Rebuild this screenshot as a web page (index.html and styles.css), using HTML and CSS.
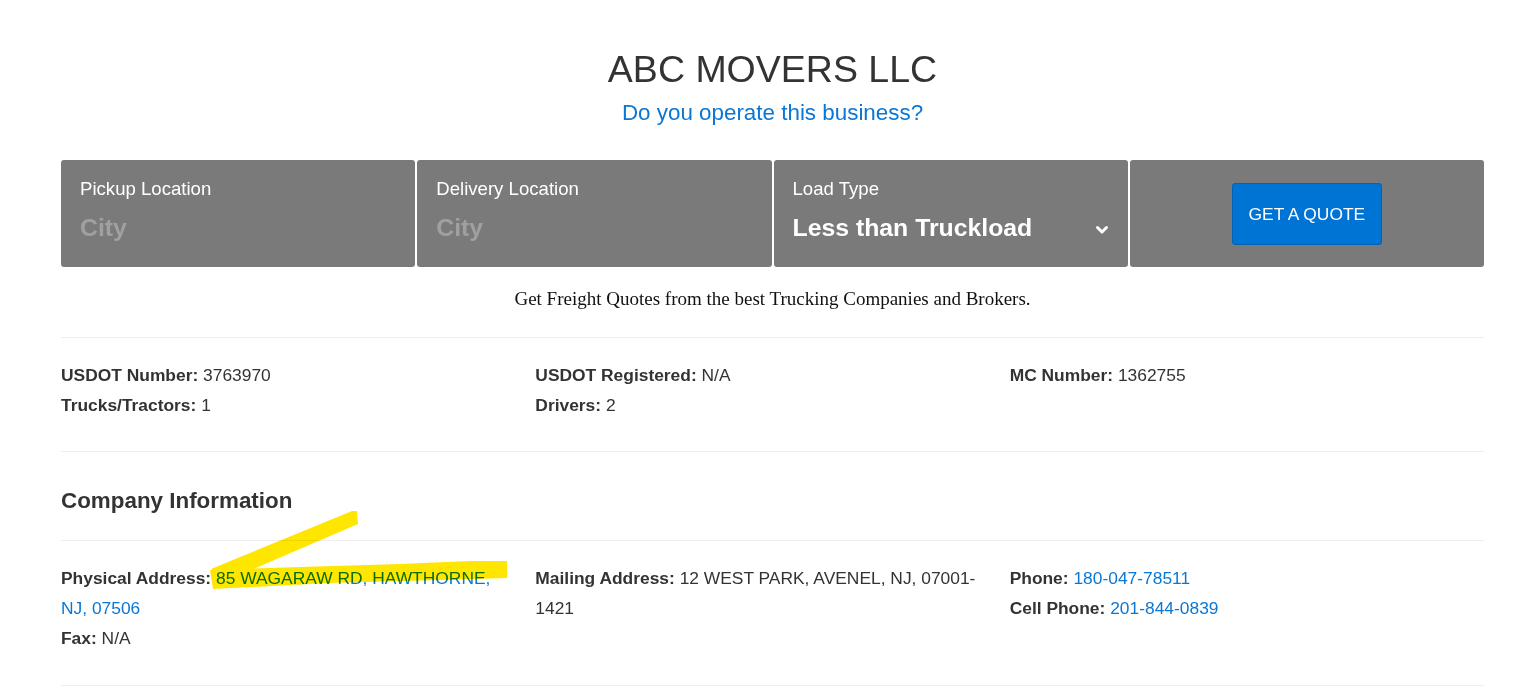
FILE: index.html
```html
<!DOCTYPE html>
<html lang="en">
<head>
<meta charset="utf-8">
<title>ABC MOVERS LLC</title>
<link rel="stylesheet" href="styles.css">
</head>
<body>
<div class="page">
  <header class="hero">
    <h1 class="hero-title">ABC MOVERS LLC</h1>
    <a class="hero-claim" href="#">Do you operate this business?</a>
  </header>

  <form class="quote">
    <div class="quote-field">
      <span class="quote-label">Pickup Location</span>
      <span class="quote-input placeholder">City</span>
    </div>
    <div class="quote-field">
      <span class="quote-label">Delivery Location</span>
      <span class="quote-input placeholder">City</span>
    </div>
    <div class="quote-field">
      <span class="quote-label">Load Type</span>
      <span class="quote-input quote-select">
        <span>Less than Truckload</span>
        <svg class="chevron" width="14" height="10" viewBox="0 0 14 10"><polyline points="2.5,2.5 7,7 11.5,2.5" fill="none" stroke="#fff" stroke-width="3" stroke-linecap="round" stroke-linejoin="round"/></svg>
      </span>
    </div>
    <div class="quote-field quote-action">
      <button type="button" class="quote-btn">GET A QUOTE</button>
    </div>
  </form>

  <p class="tagline">Get Freight Quotes from the best Trucking Companies and Brokers.</p>

  <hr class="rule">

  <section class="facts facts-top">
    <div class="fact-col">
      <div class="fact"><b>USDOT Number:</b> 3763970</div>
      <div class="fact"><b>Trucks/Tractors:</b> 1</div>
    </div>
    <div class="fact-col">
      <div class="fact"><b>USDOT Registered:</b> N/A</div>
      <div class="fact"><b>Drivers:</b> 2</div>
    </div>
    <div class="fact-col">
      <div class="fact"><b>MC Number:</b> 1362755</div>
    </div>
  </section>

  <hr class="rule">

  <h2 class="section-title">Company Information</h2>

  <hr class="rule">

  <section class="facts facts-info">
    <div class="fact-col">
      <div class="fact"><b>Physical Address:</b> <a href="#">85 WAGARAW RD, HAWTHORNE, NJ, 07506</a></div>
      <div class="fact"><b>Fax:</b> N/A</div>
    </div>
    <div class="fact-col">
      <div class="fact"><b>Mailing Address:</b> 12 WEST PARK, AVENEL, NJ, 07001-1421</div>
    </div>
    <div class="fact-col">
      <div class="fact"><b>Phone:</b> <a href="#">180-047-78511</a></div>
      <div class="fact"><b>Cell Phone:</b> <a href="#">201-844-0839</a></div>
    </div>
  </section>

  <hr class="rule">
</div>

<svg class="highlighter" width="1522" height="690" viewBox="0 0 1522 690" aria-hidden="true">
  <polygon points="210,570 300,567 400,564 470,561 507,561 507,578 440,580 330,583 213,589" fill="#ffe600"/>
  <polygon points="211,569 352,511 357,511 358,524 228,580" fill="#ffe600"/>
</svg>
</body>
</html>
```

FILE: styles.css
```css
* { box-sizing: border-box; }

html, body {
  margin: 0;
  padding: 0;
  background: #fff;
}

body {
  position: relative;
  font-family: "Liberation Sans", Arial, sans-serif;
  color: #333;
}

.page {
  width: 1423px;
  margin-left: 61px;
  padding-top: 47px;
}

.hero {
  display: flex;
  flex-direction: column;
  align-items: center;
}

.hero-title {
  margin: 0;
  font-size: 37.5px;
  line-height: 44px;
  font-weight: 400;
  color: #333;
}

.hero-claim {
  margin-top: 8px;
  font-size: 22.4px;
  line-height: 28px;
  color: #0a77d5;
  text-decoration: none;
}

.quote {
  display: grid;
  grid-template-columns: repeat(4, 1fr);
  gap: 2px;
  margin-top: 33px;
}

.quote-field {
  display: flex;
  flex-direction: column;
  height: 107px;
  padding: 18px 20px 0 19px;
  background: #7a7a7a;
  border-radius: 3px;
}

.quote-label {
  font-size: 18.6px;
  line-height: 22px;
  color: #fff;
}

.quote-input {
  margin-top: 13px;
  font-size: 24.8px;
  line-height: 30px;
  font-weight: 700;
  color: #fff;
}

.placeholder {
  color: #a0a0a0;
}

.quote-select {
  display: flex;
  align-items: center;
  justify-content: space-between;
}

.chevron {
  margin-top: 4px;
  margin-right: -1px;
}

.quote-action {
  align-items: center;
  justify-content: center;
  padding: 0;
}

.quote-btn {
  width: 150px;
  height: 62px;
  margin-top: 1px;
  border: 1px solid #0063b8;
  border-radius: 3px;
  background: #0074d4;
  color: #fff;
  font-family: "Liberation Sans", Arial, sans-serif;
  font-size: 17.4px;
  cursor: pointer;
}

.tagline {
  margin: 20px 0 0;
  text-align: center;
  font-family: "Liberation Serif", "Times New Roman", serif;
  font-size: 19px;
  line-height: 24px;
  color: #111;
}

.rule {
  margin: 0;
  border: 0;
  border-top: 1px solid #eee;
}

.tagline + .rule { margin-top: 26px; }

.facts {
  display: grid;
  grid-template-columns: repeat(3, 1fr);
}

.facts-top { padding: 22px 0 31px; }
.facts-info { padding: 22px 0 32px; }

.fact-col {
  padding-right: 28px;
}

.fact {
  font-size: 17.4px;
  line-height: 30px;
  color: #333;
}

.fact b { font-weight: 700; }

.fact a {
  color: #0a77d5;
  text-decoration: none;
}

.section-title {
  margin: 0;
  padding: 34px 0 24px;
  font-size: 22.4px;
  line-height: 30px;
  font-weight: 700;
  color: #333;
}

.highlighter {
  position: absolute;
  left: 0;
  top: 0;
  pointer-events: none;
  mix-blend-mode: multiply;
}
```
